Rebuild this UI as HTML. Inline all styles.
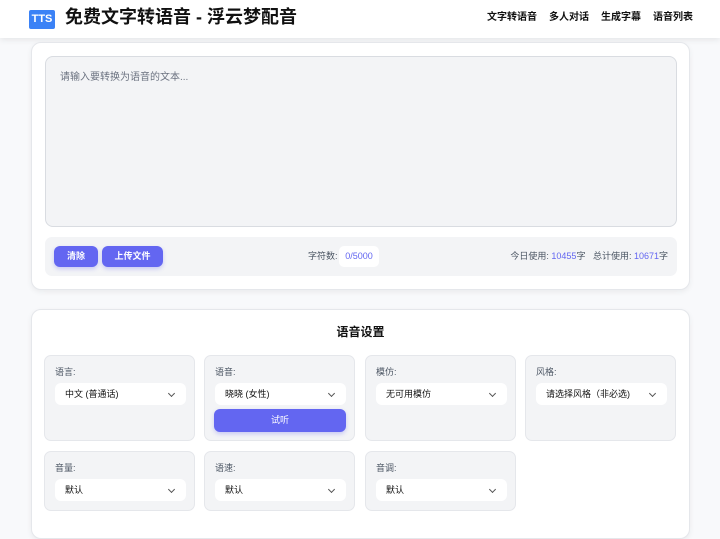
<!DOCTYPE html><html><head><meta charset="utf-8"><style>
*{box-sizing:border-box;margin:0;padding:0}
body{width:720px;height:517px;overflow:hidden;background:#f8f9fb;font-family:"Liberation Sans","Noto Sans CJK SC",sans-serif;color:#1f2937;position:relative;line-height:1.2}
.hdr{position:absolute;left:0;top:0;width:720px;height:38px;background:#fff;box-shadow:0 2px 6px rgba(0,0,0,.08)}
.logo{position:absolute;left:29px;top:10px;width:26px;height:19px;background:#3b82f6;color:#fff;font-size:11px;font-weight:bold;text-align:center;line-height:19px;border-radius:2px}
.title{position:absolute;left:65px;top:7px;font-size:18px;font-weight:bold;color:#111}
.nav{position:absolute;right:27px;top:12px;font-size:10px;font-weight:bold;color:#111}
.nav span{margin-left:12px}
.card{position:absolute;left:31px;width:659px;background:#fff;border:1px solid #e5e7eb;border-radius:10px;box-shadow:0 2px 6px rgba(0,0,0,.06)}
.ta{position:absolute;left:13px;top:13px;width:632px;height:171px;background:#f3f4f6;border:1px solid #d9dce1;border-radius:8px;font-size:10px;color:#6b7280;padding:15px 14px}
.tb{position:absolute;left:13px;top:194px;width:632px;height:39px;background:#f3f4f6;border-radius:7px;font-size:9px;color:#4b5563}
.btn{position:absolute;top:9px;height:21px;background:#6366f1;color:#fff;font-size:9px;font-weight:bold;text-align:center;line-height:21px;border-radius:6px;box-shadow:0 2px 4px rgba(99,102,241,.3)}
.v{color:#6366f1}
.box{position:absolute;width:151px;background:#f3f4f6;border:1px solid #e5e7eb;border-radius:7px;font-size:9px;color:#4b5563}
.box .l{position:absolute;left:10px;top:11px}
.sel{position:absolute;left:10px;top:27px;width:131px;height:22px;background:#fff;border-radius:6px;font-size:9px;color:#111;line-height:22px;padding-left:10px}
.sel:after{content:"";position:absolute;right:12px;top:8px;width:4px;height:4px;border-right:1px solid #555;border-bottom:1px solid #555;transform:rotate(45deg)}
</style></head><body>
<div class="hdr"><div class="logo">TTS</div><div class="title">免费文字转语音 - 浮云梦配音</div>
<div class="nav"><span>文字转语音</span><span>多人对话</span><span>生成字幕</span><span>语音列表</span></div></div>
<div class="card" style="top:42px;height:248px">
<div class="ta">请输入要转换为语音的文本...</div>
<div class="tb">
<div class="btn" style="left:9px;width:44px">清除</div>
<div class="btn" style="left:57px;width:61px">上传文件</div>
<div style="position:absolute;left:263px;top:14px">字符数:</div>
<div style="position:absolute;left:294px;top:9px;width:40px;height:21px;background:#fff;border-radius:5px;line-height:21px;text-align:center" class="v">0/5000</div>
<div style="position:absolute;right:9px;top:14px">今日使用: <span class="v">10455</span>字 &nbsp; 总计使用: <span class="v">10671</span>字</div>
</div></div>
<div class="card" style="top:309px;height:230px">
<div style="position:absolute;left:0;width:100%;top:15px;text-align:center;font-size:12px;font-weight:bold;color:#111">语音设置</div></div>
<div class="box" style="left:44px;top:355px;height:86px"><div class="l">语言:</div><div class="sel">中文 (普通话)</div></div>
<div class="box" style="left:204px;top:355px;height:86px"><div class="l">语音:</div><div class="sel">晓晓 (女性)</div>
<div class="btn" style="left:9px;top:53px;width:132px;height:23px;line-height:23px;font-weight:normal">试听</div></div>
<div class="box" style="left:365px;top:355px;height:86px"><div class="l">模仿:</div><div class="sel">无可用模仿</div></div>
<div class="box" style="left:525px;top:355px;height:86px"><div class="l">风格:</div><div class="sel">请选择风格（非必选)</div></div>
<div class="box" style="left:44px;top:451px;height:60px"><div class="l">音量:</div><div class="sel">默认</div></div>
<div class="box" style="left:204px;top:451px;height:60px"><div class="l">语速:</div><div class="sel">默认</div></div>
<div class="box" style="left:365px;top:451px;height:60px"><div class="l">音调:</div><div class="sel">默认</div></div>
</body></html>
